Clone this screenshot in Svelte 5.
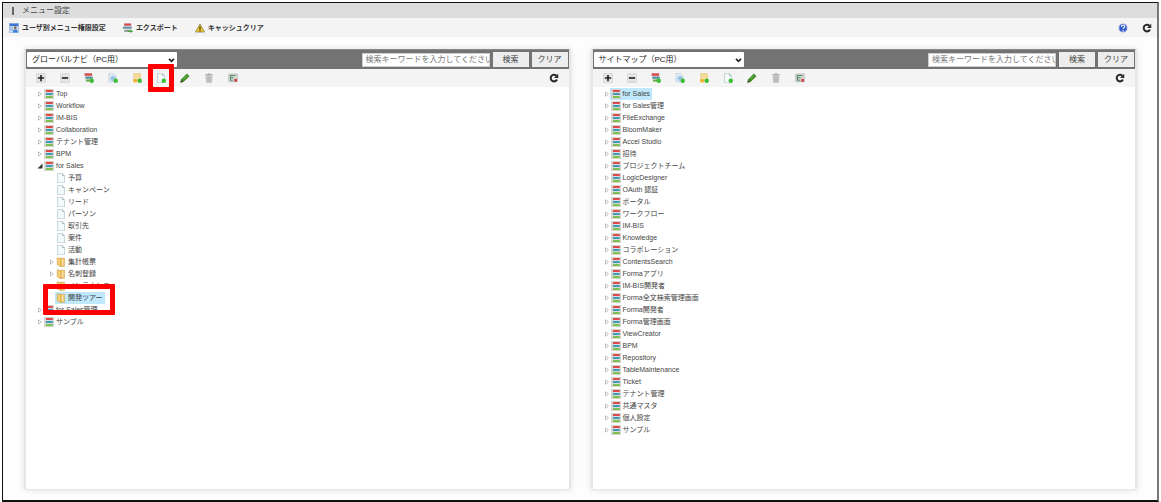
<script>
  const left = [
    { t: 'Top' },
    { t: 'Workflow' },
    { t: 'IM-BIS' },
    { t: 'Collaboration' },
    { t: 'テナント管理' },
    { t: 'BPM' },
    { t: 'for Sales', open: true },
    { t: '予算', kind: 'page' },
    { t: 'キャンペーン', kind: 'page' },
    { t: 'リード', kind: 'page' },
    { t: 'パーソン', kind: 'page' },
    { t: '取引先', kind: 'page' },
    { t: '案件', kind: 'page' },
    { t: '活動', kind: 'page' },
    { t: '集計帳票', kind: 'folder' },
    { t: '名刺登録', kind: 'folder' },
    { t: 'メンテナンス', kind: 'folder' },
    { t: '開発ツアー', kind: 'folder', leaf: true, selected: true, marked: true },
    { t: 'for Sales管理' },
    { t: 'サンプル' },
  ];
  const right = [
    'for Sales', 'for Sales管理', 'FileExchange', 'BloomMaker', 'Accel Studio', '招待',
    'プロジェクトチーム', 'LogicDesigner', 'OAuth 認証', 'ポータル', 'ワークフロー', 'IM-BIS',
    'Knowledge', 'コラボレーション', 'ContentsSearch', 'Formaアプリ', 'IM-BIS開発者',
    'Forma全文検索管理画面', 'Forma開発者', 'Forma管理画面', 'ViewCreator', 'BPM', 'Repository',
    'TableMaintenance', 'Ticket', 'テナント管理', '共通マスタ', '個人設定', 'サンプル',
  ].map((t, i) => ({ t, selected: i === 0 }));

  const panels = [
    { id: 'global', name: 'グローバルナビ（PC用）', items: left, marked: 'addpage' },
    { id: 'sitemap', name: 'サイトマップ（PC用）', items: right, marked: '' },
  ];
  const tools = [
    ['plus', 'すべて展開'],
    ['minus', 'すべて折りたたむ'],
    ['addmenu', 'メニューグループ追加'],
    ['addlink', 'リンク追加'],
    ['addfolder', 'フォルダ追加'],
    ['addpage', 'アイテム追加'],
    ['pencil', '編集'],
    ['trash', '削除'],
    ['treeoff', '選択解除'],
  ];
</script>

{#snippet badge()}
  <circle cx="12.4" cy="12.2" r="3.6" fill="#3fbd35" />
{/snippet}

{#snippet icon(name)}
  <svg class="icon" viewBox="0 0 16 16" aria-hidden="true">
    {#if name === 'plus' || name === 'minus'}
      <rect x="0.5" y="0.5" width="15" height="15" rx="1.5" fill="#e4e4e4" stroke="#cccccc" />
      <path d={name === 'plus' ? 'M3 8h10M8 3v10' : 'M3 8h10'} stroke="#222" stroke-width="2.6" />
    {:else if name === 'menu'}
      <rect x="0.5" y="0.5" width="15" height="15" fill="#dcdad8" stroke="#cacaca" />
      <path d="M3 3.2h11" stroke="#dc4a4c" stroke-width="3.2" />
      <path d="M3 8h11" stroke="#3f9cbb" stroke-width="3.2" />
      <path d="M3 12.8h11" stroke="#7fc04f" stroke-width="3.2" />
    {:else if name === 'addmenu'}
      <path d="M1 2.5h12" stroke="#d24a4a" stroke-width="4" />
      <path d="M2 7.4h12" stroke="#4c8b99" stroke-width="3.4" />
      <path d="M3 12h10" stroke="#67ab4a" stroke-width="3.4" />
      {@render badge()}
    {:else if name === 'addlink'}
      <path d="M1.500 1h8l3.500 3.500V14H1.500z" fill="#e3eef8" stroke="#b3c4d4" />
      <circle cx="8" cy="8.500" r="4" fill="#86b5df" />
      <path d="M5 7q3-2 6 0M5 10q3 2 6 0" stroke="#d8ebfa" fill="none" />
      {@render badge()}
    {:else if name === 'addfolder'}
      <path d="M3 1h10.500v12H3z" fill="#f6dc9a" stroke="#e2bd6a" />
      <path d="M2 10h6v5H2z" fill="#efb335" />
      {@render badge()}
    {:else if name === 'folder'}
      <path d="M7 2h6.500v13H7z" fill="#f2cd78" stroke="#cda04c" />
      <path d="M2 1l6 2.500v12L2 12.500z" fill="#f7cf70" stroke="#c9973a" />
      <path d="M10.500 4v9" stroke="#fbe9bd" stroke-width="1.500" />
    {:else if name === 'addpage' || name === 'page'}
      <path d="M2.500 0.500h7.500l3.500 3.500v11.500h-11z" fill="#f4fbfb" stroke="#a8bcbf" />
      <path d="M10 0.500v3.500h3.500" fill="#cfe0e3" stroke="#94aeb2" />
      {#if name === 'addpage'}{@render badge()}{/if}
    {:else if name === 'pencil'}
      <path d="M1 15l1.500-5L11 1.500l3.500 3.500L6 13.500z" fill="#3c9420" stroke="#2f721c" />
      <path d="M5 10l6-6" stroke="#79c44e" stroke-width="1.500" />
      <path d="M1 15l1.200-3.800 2.600 2.600z" fill="#4b3d28" />
    {:else if name === 'trash'}
      <path d="M2 3h12M6 1.500h4" stroke="#a2a2a2" stroke-width="1.800" />
      <path d="M3.500 5h9l-.5 10H4z" fill="#cccccc" stroke="#b0b0b0" />
      <path d="M6.500 6v8M9.500 6v8" stroke="#9d9d9d" />
    {:else if name === 'treeoff'}
      <path d="M1 1.500h14v12.500H1z" fill="#d3dad3" stroke="#aab3aa" />
      <path d="M3 4h9M4 4v8M4 7.500h5M4 11.500h4" stroke="#5c8b70" stroke-width="1.800" fill="none" />
      <path d="M10 9.500h4.500V14H10z" fill="#d04444" />
    {:else if name === 'user'}
      <rect x="0.500" y="1" width="15" height="14" fill="#cfe0f6" stroke="#86aee0" />
      <path d="M1 3h14" stroke="#3e76d0" stroke-width="4" />
      <path d="M2 8h4M2 11h4" stroke="#7797c0" stroke-width="1.500" />
      <circle cx="10" cy="7.500" r="2.300" fill="#8a6a48" />
      <path d="M6 15q0-5 4-5t4 5z" fill="#4281d2" />
    {:else if name === 'export'}
      <path d="M2 2.500h11" stroke="#d04545" stroke-width="3.600" />
      <path d="M0 7.400h14" stroke="#6c92ab" stroke-width="3.600" />
      <path d="M2 12.500h10" stroke="#8b9a90" stroke-width="3.400" />
      <path d="M8 12.500h4V10l4 3.500L12 16v-2H8z" fill="#38a634" />
    {:else if name === 'warn'}
      <path d="M8 1.500L15.300 14.500H.7z" fill="#f4ce26" stroke="#746b4c" stroke-linejoin="round" />
      <path d="M8 5.500v5M8 11.500v2" stroke="#2d2922" stroke-width="2" />
    {:else if name === 'help'}
      <circle cx="8" cy="8" r="6.500" fill="#2c58cb" stroke="#a5b5df" stroke-width="1.500" />
      <path d="M5.500 6.200q0-2.700 2.600-2.700t2.500 2.300q0 1.300-1.300 2-1.200.6-1.200 1.900M8.100 11v2" fill="none" stroke="#fff" stroke-width="1.800" />
    {:else if name === 'reload'}
      <path d="M12.800 10.500A5.300 5.300 0 1 1 11.800 4.300" fill="none" stroke="#292929" stroke-width="3.200" />
      <path d="M14.800 1v7H8z" fill="#292929" />
    {/if}
  </svg>
{/snippet}

<div class="page">
  <header class="title"><span class="grip"></span><h1>メニュー設定</h1></header>
  <nav class="bar">
    <button>{@render icon('user')}ユーザ別メニュー権限設定</button>
    <button>{@render icon('export')}エクスポート</button>
    <button>{@render icon('warn')}キャッシュクリア</button>
    <span class="end">
      <button aria-label="ヘルプ">{@render icon('help')}</button>
      <button aria-label="再読み込み">{@render icon('reload')}</button>
    </span>
  </nav>
  <main>
    {#each panels as p (p.id)}
      <section class="panel" aria-label={p.name}>
        <div class="head">
          <div class="pick">
            <select aria-label="メニュー種別"><option>{p.name}</option></select>
            <svg viewBox="0 0 8 6" aria-hidden="true"><path d="M1 1l3 3 3-3" fill="none" stroke="#222" stroke-width="2" /></svg>
          </div>
          <form onsubmit={(e) => e.preventDefault()}>
            <input type="text" aria-label="検索キーワード" placeholder="検索キーワードを入力してください" />
            <button>検索</button>
            <button type="reset">クリア</button>
          </form>
        </div>
        <div class="tools">
          {#each tools as [name, label]}
            <button aria-label={label}>
              {@render icon(name)}
              {#if p.marked === name}<span class="mark"></span>{/if}
            </button>
          {/each}
          <button class="end" aria-label="再読み込み">{@render icon('reload')}</button>
        </div>
        <ul>
          {#each p.items as n}
            <li class:child={n.kind}>
              <span class="arrow">
                {#if n.open}
                  <svg viewBox="0 0 6 6" aria-hidden="true"><path d="M5.500 0.500v5h-5z" fill="#333" /></svg>
                {:else if n.kind !== 'page' && !n.leaf}
                  <svg viewBox="0 0 6 6" aria-hidden="true"><path d="M1.500 0.800L4.500 3 1.500 5.200z" fill="#fff" stroke="#b4b4b4" stroke-width="0.800" /></svg>
                {/if}
              </span>
              <a href="#{p.id}" class:selected={n.selected}>
                {@render icon(n.kind ?? 'menu')}<span>{n.t}</span>
                {#if n.marked}<span class="mark"></span>{/if}
              </a>
            </li>
          {/each}
        </ul>
      </section>
    {/each}
  </main>
</div>

<style>
  :global(body) {
    background: #fff;
  }
  .page,
  .page * {
    box-sizing: border-box;
  }
  .page {
    display: flex;
    flex-direction: column;
    min-height: calc(100vh - 2px);
    margin: 2px 2px 0;
    border: solid #111;
    border-width: 1px 2px 2px 1px;
    border-right-color: #777;
    background: #fdfdfd;
    color: #444;
    font: 7px/12px 'Liberation Sans', 'Noto Sans CJK JP', sans-serif;
  }
  button,
  input,
  select {
    margin: 0;
    font: inherit;
    color: inherit;
  }
  button {
    display: flex;
    align-items: center;
    justify-content: center;
    padding: 0;
    border: 0;
    background: none;
    white-space: nowrap;
  }
  .icon {
    flex: none;
    width: 10px;
    height: 10px;
  }
  .title {
    display: flex;
    align-items: center;
    gap: 8px;
    height: 15px;
    padding-left: 9px;
    background: #ddd;
  }
  .grip {
    width: 2px;
    height: 8px;
    background: #66666e;
  }
  h1 {
    margin: 0;
    font-size: 8px;
    font-weight: 400;
    color: #444;
  }
  .bar {
    display: flex;
    align-items: center;
    gap: 17px;
    height: 19px;
    padding: 0 5px 0 6px;
    background: #f4f4f4;
    color: #333;
    font-weight: 700;
  }
  .bar button {
    gap: 3px;
    font-weight: 700;
  }
  .end {
    margin-left: auto;
  }
  span.end {
    display: flex;
    gap: 14px;
  }
  main {
    flex: 1;
    display: grid;
    grid-template-columns: 1fr 1fr;
    gap: 20px;
    padding: 12px 20px 10px 21px;
  }
  .panel {
    min-width: 0;
    border: 2px solid #e6e6e6;
    border-top: 1px solid #8a8a8a;
    border-bottom-width: 1px;
    border-radius: 2px;
    background: #fff;
    box-shadow: 0 0 6px rgb(0 0 0 / 12%);
  }
  .head {
    display: flex;
    align-items: center;
    justify-content: space-between;
    height: 19px;
    padding: 0 1px;
    background: #737373;
    font-size: 8px;
  }
  .pick {
    position: relative;
    width: 150px;
  }
  .pick svg {
    position: absolute;
    right: 2px;
    top: 6px;
    width: 7px;
    height: 5px;
    pointer-events: none;
  }
  select {
    display: block;
    appearance: none;
    width: 100%;
    height: 15px;
    padding: 0 12px 0 5px;
    border: 0;
    border-radius: 1px;
    background: #fff;
    color: #222;
  }
  form {
    display: flex;
    align-items: center;
    gap: 3px;
  }
  input {
    width: 128px;
    height: 14px;
    padding: 0 0 0 3px;
    border: 1px solid #ccc;
    background: #fff;
  }
  input::placeholder {
    color: #777;
  }
  form button {
    width: 36px;
    height: 15px;
    background: #ededed;
  }
  .tools {
    display: flex;
    height: 18px;
    padding: 0 3px;
    background: #f4f4f4;
  }
  .tools button {
    position: relative;
    width: 24px;
    height: 18px;
  }
  .mark {
    position: absolute;
    border: 5px solid #f00;
    border-radius: 1px;
    z-index: 1;
    pointer-events: none;
  }
  .tools .mark {
    inset: -5px -1px;
  }
  ul {
    margin: 0;
    padding: 1px 0 0 11px;
    list-style: none;
  }
  li {
    display: flex;
    height: 12px;
  }
  .child {
    padding-left: 12px;
  }
  .arrow {
    display: flex;
    align-items: center;
    width: 6px;
  }
  .arrow svg {
    width: 6px;
    height: 6px;
  }
  li a {
    position: relative;
    display: flex;
    align-items: center;
    gap: 2px;
    height: 12px;
    padding: 0 2px 0 1px;
    color: inherit;
    text-decoration: none;
    white-space: nowrap;
  }
  .selected {
    background: #bfe8fc;
  }
  li .mark {
    inset: -8px -10px -11px -12px;
  }
</style>
